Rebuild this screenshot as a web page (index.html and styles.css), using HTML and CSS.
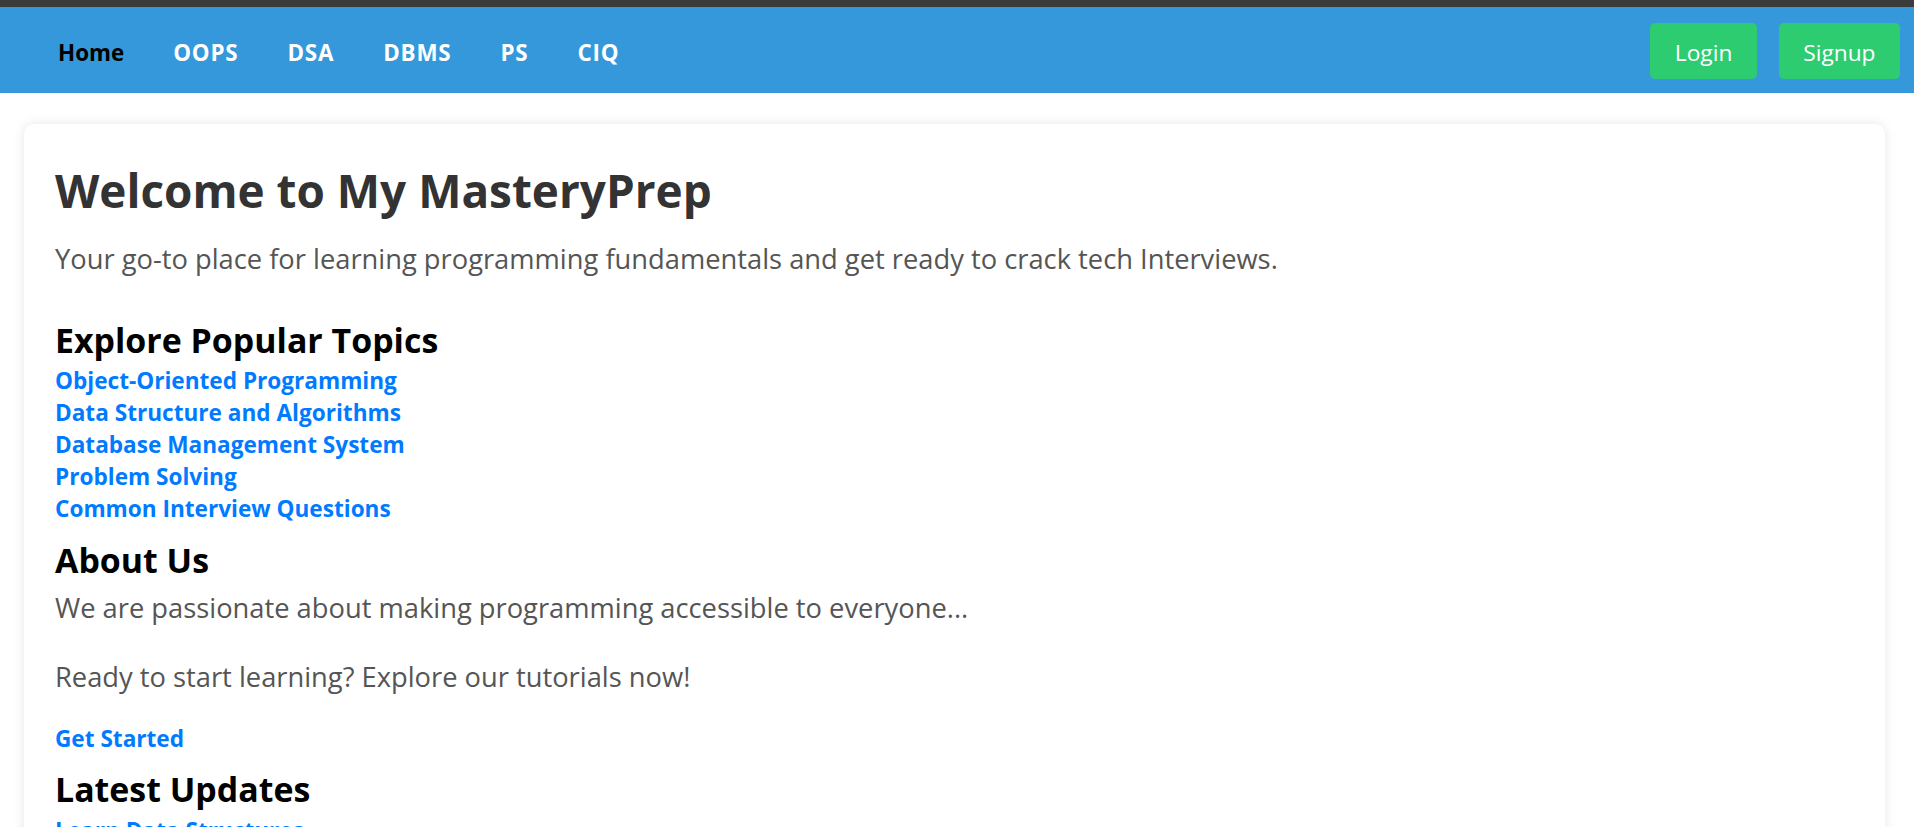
FILE: index.html
```html
<!DOCTYPE html>
<html lang="en">
<head>
<meta charset="utf-8">
<title>MasteryPrep</title>
<link rel="stylesheet" href="styles.css">
</head>
<body>
<div class="topstrip"></div>
<header class="navbar">
  <nav class="nav-links">
    <a class="nav-link active" href="#">Home</a>
    <a class="nav-link" href="#">OOPS</a>
    <a class="nav-link" href="#">DSA</a>
    <a class="nav-link" href="#">DBMS</a>
    <a class="nav-link" href="#">PS</a>
    <a class="nav-link" href="#">CIQ</a>
  </nav>
  <div class="auth">
    <a class="btn" href="#">Login</a>
    <a class="btn" href="#">Signup</a>
  </div>
</header>

<main class="card">
  <h1 class="title">Welcome to My MasteryPrep</h1>
  <p class="lead">Your go-to place for learning programming fundamentals and get ready to crack tech Interviews.</p>

  <section class="topics">
    <h2 class="section-title">Explore Popular Topics</h2>
    <div class="link-list">
      <a class="topic-link" href="#">Object-Oriented Programming</a>
      <a class="topic-link" href="#">Data Structure and Algorithms</a>
      <a class="topic-link" href="#">Database Management System</a>
      <a class="topic-link" href="#">Problem Solving</a>
      <a class="topic-link" href="#">Common Interview Questions</a>
    </div>
  </section>

  <section class="about">
    <h2 class="section-title about-title">About Us</h2>
    <p class="text first">We are passionate about making programming accessible to everyone...</p>
    <p class="text second">Ready to start learning? Explore our tutorials now!</p>
    <a class="topic-link cta" href="#">Get Started</a>
  </section>

  <section class="updates">
    <h2 class="section-title updates-title">Latest Updates</h2>
    <div class="link-list">
      <a class="topic-link" href="#">Learn Data Structures</a>
      <a class="topic-link" href="#">Master OOP Concepts</a>
    </div>
  </section>
</main>
</body>
</html>
```
FILE: styles.css
```css
* { box-sizing: border-box; }

html, body {
  margin: 0;
  padding: 0;
  background: #ffffff;
  font-family: "Open Sans", "Noto Sans", sans-serif;
}

.topstrip {
  height: 7px;
  background: #3b3b3b;
}

.navbar {
  height: 86px;
  background: #3498db;
  display: flex;
  align-items: center;
  justify-content: space-between;
  padding: 0 14px 0 33.5px;
}

.nav-links {
  display: flex;
  align-items: center;
}

.nav-link {
  display: block;
  padding: 5px 24.5px 0;
  font-size: 22.4px;
  line-height: 30px;
  font-weight: 700;
  letter-spacing: 0.8px;
  color: #ffffff;
  text-decoration: none;
}

.nav-link.active {
  color: #000000;
  letter-spacing: 0;
}

.auth {
  display: flex;
  gap: 22px;
  padding-top: 2px;
}

.btn {
  display: block;
  padding: 14px 24.5px 11px;
  font-size: 22.7px;
  line-height: 31px;
  color: #ffffff;
  background: #2ecc71;
  border-radius: 5px;
  text-decoration: none;
}

.card {
  margin: 31px 29px 0 24px;
  padding: 38px 31px 40px;
  background: #ffffff;
  border-radius: 10px;
  box-shadow: 0 0 12px rgba(0, 0, 0, 0.1);
}

.title {
  margin: 0 0 23px;
  font-size: 45.9px;
  line-height: 56px;
  font-weight: 700;
  color: #333333;
}

.lead {
  margin: 0 0 43px;
  font-size: 27.3px;
  line-height: 36px;
  color: #555555;
}

.section-title {
  margin: 0 0 5px;
  font-size: 33.9px;
  line-height: 40px;
  font-weight: 700;
  color: #000000;
}

.link-list {
  display: flex;
  flex-direction: column;
  align-items: flex-start;
}

.topic-link {
  display: block;
  font-size: 22.6px;
  line-height: 32px;
  font-weight: 700;
  color: #007bff;
  text-decoration: none;
}

.topics { margin-bottom: 15px; }

.about-title { margin-bottom: 9.5px; }

.text {
  margin: 0;
  font-size: 27.3px;
  line-height: 36px;
  color: #555555;
}

.text.first { margin-bottom: 33px; }
.text.second { margin-bottom: 28.5px; }

.cta {
  width: max-content;
  margin-bottom: 14px;
}

.updates-title { margin-bottom: 6px; }
```
